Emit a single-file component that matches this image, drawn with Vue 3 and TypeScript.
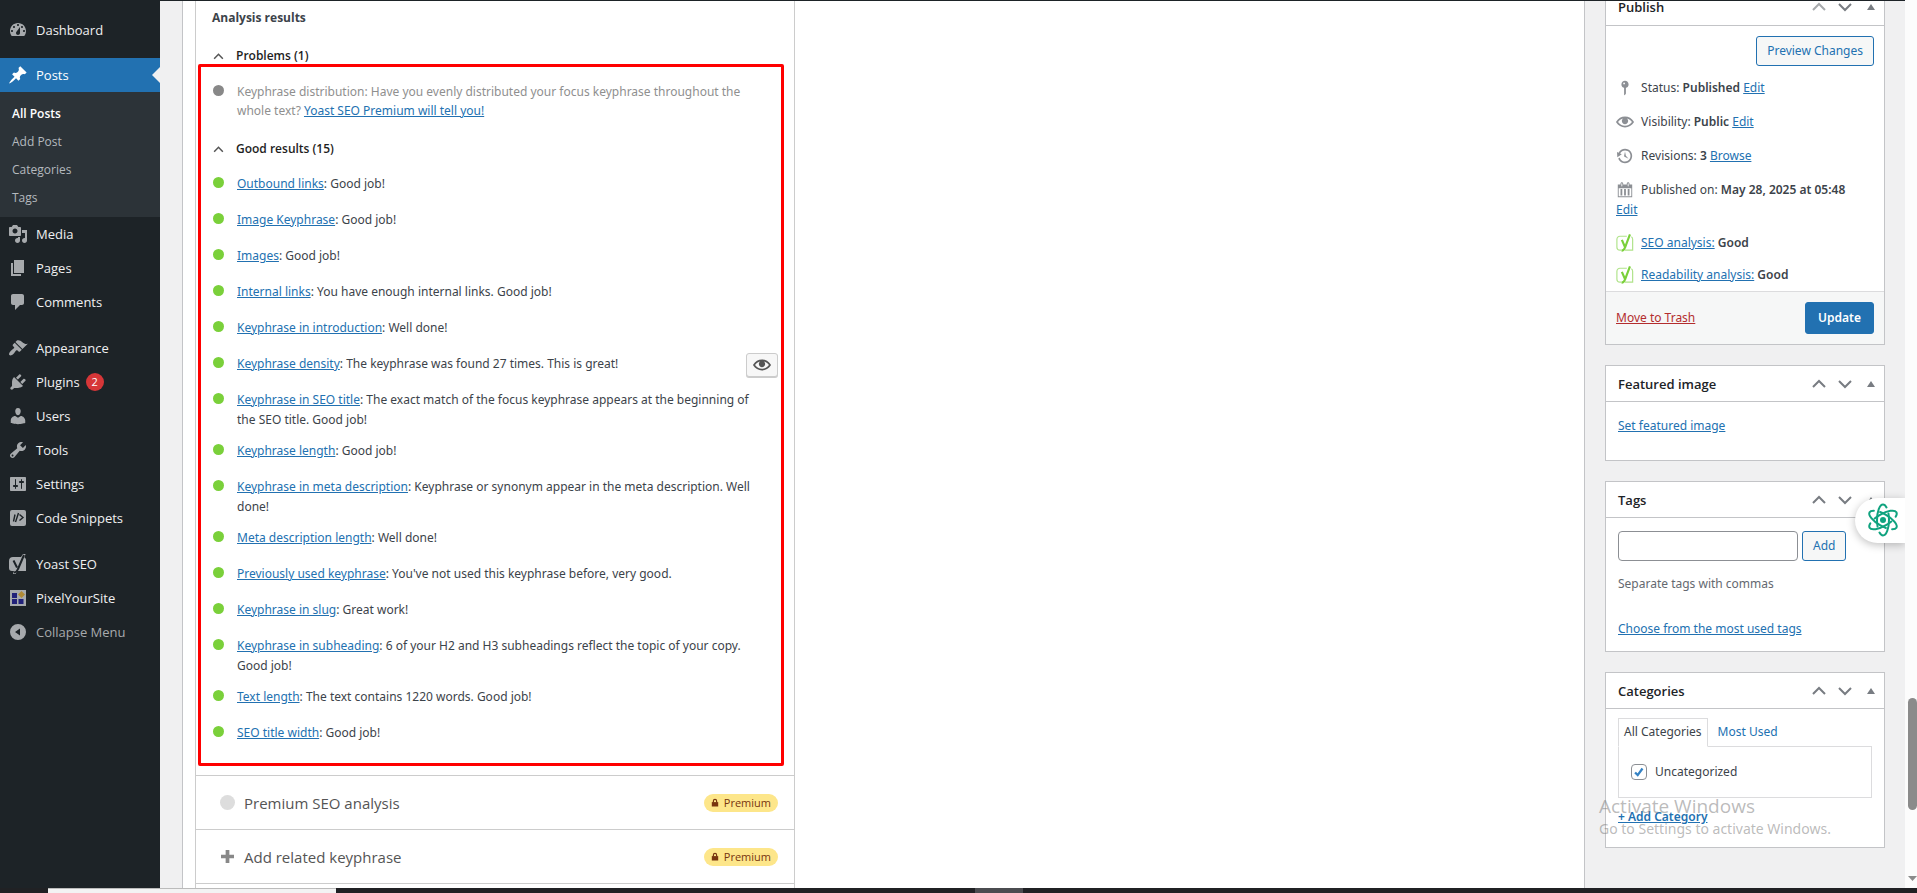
<script setup lang="ts">
import { ref } from 'vue'

interface MenuItem {
  label: string
  icon: string
  active?: boolean
  badge?: number
  gapAfter?: boolean
  children?: string[]
}

interface Result {
  link: string
  text: string
  marker?: boolean
}

const icons: Record<string, string> = {
  dashboard:
    'M3.76 16h12.48C17.34 14.63 18 12.89 18 11c0-4.41-3.58-8-8-8s-8 3.59-8 8c0 1.89.66 3.63 1.76 5zM10 4c.55 0 1 .45 1 1s-.45 1-1 1-1-.45-1-1 .45-1 1-1zM6 6c.55 0 1 .45 1 1s-.45 1-1 1-1-.45-1-1 .45-1 1-1zm8 0c.55 0 1 .45 1 1s-.45 1-1 1-1-.45-1-1 .45-1 1-1zm-5.37 5.55L12 7v6c0 1.1-.9 2-2 2s-2-.9-2-2c0-.57.24-1.08.63-1.45zM4 10c.55 0 1 .45 1 1s-.45 1-1 1-1-.45-1-1 .45-1 1-1zm12 0c.55 0 1 .45 1 1s-.45 1-1 1-1-.45-1-1 .45-1 1-1z',
  post: 'M10.44 3.02l1.82-1.82 6.36 6.35-1.83 1.82c-1.05-.68-2.48-.57-3.41.36l-.75.75c-.92.93-1.04 2.35-.35 3.41l-1.83 1.82-2.41-2.41-2.8 2.79c-.42.42-3.38 2.71-3.8 2.29s1.86-3.39 2.28-3.81l2.79-2.79L4.1 9.36l1.83-1.82c1.05.69 2.48.57 3.4-.36l.75-.75c.93-.92 1.05-2.35.36-3.41z',
  media:
    'M13 11V4c0-.55-.45-1-1-1h-1.67L9 1H5L3.67 3H2c-.55 0-1 .45-1 1v7c0 .55.45 1 1 1h10c.55 0 1-.45 1-1zM7 4.5c1.38 0 2.5 1.12 2.5 2.5S8.38 9.5 7 9.5 4.5 8.38 4.5 7 5.62 4.5 7 4.5zM14 6h5v10.5c0 1.38-1.12 2.5-2.5 2.5S14 17.88 14 16.5s1.12-2.5 2.5-2.5c.17 0 .34.02.5.05V9h-3V6zm-4 8.05V13h2v3.5c0 1.38-1.12 2.5-2.5 2.5S7 17.88 7 16.5 8.12 14 9.5 14c.17 0 .34.02.5.05z',
  page: 'M6 15V2h10v13H6zm-1 1h8v2H3V5h2v11z',
  comments:
    'M5 2h9c1.1 0 2 .9 2 2v7c0 1.1-.9 2-2 2h-2l-5 5v-5H5c-1.1 0-2-.9-2-2V4c0-1.1.9-2 2-2z',
  appearance:
    'M14.48 11.06L7.41 3.99l1.5-1.5c.5-.56 2.3-.47 3.51.32 1.21.8 1.43 1.28 2.91 2.1 1.18.64 2.45 1.26 4.45.85zm-.71.71L6.7 4.7 4.93 6.47c-.39.39-.39 1.02 0 1.41l1.06 1.06c.39.39.39 1.03 0 1.42-.6.6-1.43 1.11-2.21 1.69-.35.26-.7.53-1.01.84C1.43 14.23.4 16.08 1.4 17.07c.99 1 2.84-.03 4.18-1.36.31-.31.58-.66.85-1.02.57-.78 1.08-1.61 1.69-2.21.39-.39 1.02-.39 1.41 0l1.06 1.06c.39.39 1.02.39 1.41 0z',
  plugins:
    'M13.11 4.36L9.87 7.6 8 5.73l3.24-3.24c.35-.34 1.05-.2 1.56.32.52.51.66 1.21.31 1.55zm-8 1.77l.91-1.12 9.01 9.01-1.19.84c-.71.71-2.63 1.16-3.82 1.16H6.14L4.9 17.26c-.59.59-1.54.59-2.12 0-.59-.58-.59-1.53 0-2.12l1.24-1.24v-3.88c0-1.13.4-3.19 1.09-3.89zm7.26 3.97l3.24-3.24c.34-.35 1.04-.21 1.55.31.52.51.66 1.21.31 1.55l-3.24 3.25z',
  users:
    'M10 9.25c-2.27 0-2.73-3.44-2.73-3.44C7 4.02 7.82 2 9.97 2c2.16 0 2.98 2.02 2.71 3.81 0 0-.41 3.44-2.68 3.44zm0 2.57L12.72 10c2.39 0 4.52 2.33 4.52 4.53v2.49s-3.65 1.13-7.24 1.13c-3.65 0-7.24-1.13-7.24-1.13v-2.49c0-2.25 1.94-4.48 4.47-4.48z',
  tools:
    'M16.68 9.77c-1.34 1.34-3.3 1.67-4.95.99l-5.41 6.52c-.99.99-2.59.99-3.58 0s-.99-2.59 0-3.57l6.52-5.42c-.68-1.65-.35-3.61.99-4.95 1.28-1.28 3.12-1.62 4.72-1.06l-2.89 2.89 2.82 2.82 2.86-2.87c.53 1.58.18 3.39-1.08 4.65zM3.81 16.21c.4.39 1.04.39 1.43 0 .4-.4.4-1.04 0-1.43-.39-.4-1.03-.4-1.43 0-.39.39-.39 1.03 0 1.43z',
  settings:
    'M18 16V4c0-.55-.45-1-1-1H3c-.55 0-1 .45-1 1v12c0 .55.45 1 1 1h14c.55 0 1-.45 1-1zM8 11h1c.55 0 1 .45 1 1s-.45 1-1 1H8v1.5c0 .28-.22.5-.5.5s-.5-.22-.5-.5V13H6c-.55 0-1-.45-1-1s.45-1 1-1h1V5.5c0-.28.22-.5.5-.5s.5.22.5.5V11zm5-2h-1c-.55 0-1-.45-1-1s.45-1 1-1h1V5.5c0-.28.22-.5.5-.5s.5.22.5.5V7h1c.55 0 1 .45 1 1s-.45 1-1 1h-1v5.5c0 .28-.22.5-.5.5s-.5-.22-.5-.5V9z',
  eye: 'M19.7 9.4C17.7 6 14 3.9 10 3.9S2.3 6 .3 9.4L0 10l.3.6c2 3.4 5.7 5.5 9.7 5.5s7.7-2.1 9.7-5.5l.3-.6-.3-.6zM10 14.1c-3.1 0-6-1.6-7.7-4.1C3.6 8 5.7 6.6 8 6.1c-.9.6-1.5 1.7-1.5 2.9 0 1.9 1.6 3.5 3.5 3.5s3.5-1.6 3.5-3.5c0-1.2-.6-2.3-1.5-2.9 2.3.5 4.4 1.9 5.7 3.9-1.7 2.5-4.6 4.1-7.7 4.1z',
  pin: 'M14 6c0 1.86-1.28 3.41-3 3.86V16c0 1-2 2-2 2V9.86c-1.72-.45-3-2-3-3.86 0-2.21 1.79-4 4-4s4 1.79 4 4zM8 5c0 .55.45 1 1 1s1-.45 1-1-.45-1-1-1-1 .45-1 1z',
  backup:
    'M13.65 2.88c3.93 2.01 5.48 6.84 3.47 10.77s-6.83 5.48-10.77 3.47c-1.87-.96-3.2-2.56-3.86-4.4l1.64-1.03c.45 1.57 1.52 2.95 3.08 3.76 3.01 1.54 6.69.35 8.23-2.66 1.55-3.01.36-6.69-2.65-8.24C9.78 3.01 6.1 4.2 4.56 7.21l1.88.97-4.95 3.08-.39-5.82 1.78.91C4.9 2.4 9.75.89 13.65 2.88zm-4.36 7.83C9.11 10.53 9 10.28 9 10c0-.07.03-.12.04-.19h-.01L10 5l.97 4.81L14 13l-4.5-2.12.02-.02c-.08-.04-.16-.09-.23-.15z',
  calendar:
    'M15 4h3v14H2V4h3V3c0-.83.67-1.5 1.5-1.5S8 2.17 8 3v1h4V3c0-.83.67-1.5 1.5-1.5S15 2.17 15 3v1zM6 3v2.5c0 .28.22.5.5.5s.5-.22.5-.5V3c0-.28-.22-.5-.5-.5S6 2.72 6 3zm7 0v2.5c0 .28.22.5.5.5s.5-.22.5-.5V3c0-.28-.22-.5-.5-.5s-.5.22-.5.5zm4 14V8H3v9h14zM7 16V9H5v7h2zm4 0V9H9v7h2zm4 0V9h-2v7h2z',
}

const menu: MenuItem[] = [
  { label: 'Dashboard', icon: 'dashboard', gapAfter: true },
  {
    label: 'Posts',
    icon: 'post',
    active: true,
    children: ['All Posts', 'Add Post', 'Categories', 'Tags'],
  },
  { label: 'Media', icon: 'media' },
  { label: 'Pages', icon: 'page' },
  { label: 'Comments', icon: 'comments', gapAfter: true },
  { label: 'Appearance', icon: 'appearance' },
  { label: 'Plugins', icon: 'plugins', badge: 2 },
  { label: 'Users', icon: 'users' },
  { label: 'Tools', icon: 'tools' },
  { label: 'Settings', icon: 'settings' },
  { label: 'Code Snippets', icon: 'snippets', gapAfter: true },
  { label: 'Yoast SEO', icon: 'yoast' },
  { label: 'PixelYourSite', icon: 'pixel' },
]

const results: Result[] = [
  { link: 'Outbound links', text: 'Good job!' },
  { link: 'Image Keyphrase', text: 'Good job!' },
  { link: 'Images', text: 'Good job!' },
  { link: 'Internal links', text: 'You have enough internal links. Good job!' },
  { link: 'Keyphrase in introduction', text: 'Well done!' },
  { link: 'Keyphrase density', text: 'The keyphrase was found 27 times. This is great!', marker: true },
  {
    link: 'Keyphrase in SEO title',
    text: 'The exact match of the focus keyphrase appears at the beginning of the SEO title. Good job!',
  },
  { link: 'Keyphrase length', text: 'Good job!' },
  {
    link: 'Keyphrase in meta description',
    text: 'Keyphrase or synonym appear in the meta description. Well done!',
  },
  { link: 'Meta description length', text: 'Well done!' },
  { link: 'Previously used keyphrase', text: "You've not used this keyphrase before, very good." },
  { link: 'Keyphrase in slug', text: 'Great work!' },
  {
    link: 'Keyphrase in subheading',
    text: '6 of your H2 and H3 subheadings reflect the topic of your copy. Good job!',
  },
  { link: 'Text length', text: 'The text contains 1220 words. Good job!' },
  { link: 'SEO title width', text: 'Good job!' },
]

const status = [
  { icon: 'pin', label: 'Status:', value: 'Published', action: 'Edit' },
  { icon: 'eye', label: 'Visibility:', value: 'Public', action: 'Edit' },
  { icon: 'backup', label: 'Revisions:', value: '3', action: 'Browse' },
  { icon: 'calendar', label: 'Published on:', value: 'May 28, 2025 at 05:48', action: 'Edit' },
]

const scores = ['SEO analysis:', 'Readability analysis:']
const panels = ['Publish', 'Featured image', 'Tags', 'Categories']
const newTag = ref('')
const uncategorized = ref(true)
</script>

<template>
  <div class="desktop">
    <div class="browser">
      <div class="page">
        <nav class="sidebar" aria-label="Main menu">
          <template v-for="item in menu" :key="item.label">
            <a href="#" class="menu-item" :class="{ active: item.active }">
              <svg v-if="item.icon === 'snippets'" class="icon" viewBox="0 0 20 20">
                <rect x="2" y="2" width="16" height="16" rx="2" />
                <path class="cut" d="M7 6.5L5.500 13.500M10.500 5L7.500 14M11.500 6.500L15 9.500L11.500 12.500" />
              </svg>
              <svg v-else-if="item.icon === 'yoast'" class="icon" viewBox="0 0 20 20">
                <path d="M5 3h8l2-3h2.600l-1.200 3.200C17.400 4 18 5 18 6v11H9l-1.500 3H5l1-3H4c-2 0-3-1-3-3V7c0-2.500 1.500-4 4-4z" />
                <path class="cut thick" d="M5.500 6.500l3.500 7M16 1L10 15c-1 2.500-2 3.500-4 3.500" />
              </svg>
              <svg v-else-if="item.icon === 'pixel'" class="icon" viewBox="0 0 20 20">
                <rect x="2" y="2" width="16" height="16" />
                <path fill="#22227a" d="M4 5h5v5H4zM4 11h5v5H4zM10.500 11h5v5h-5z" />
                <path fill="#b08a35" d="M13.500 3l3.500 3.500-3.500 3.500L10 6.500z" />
              </svg>
              <svg v-else class="icon" viewBox="0 0 20 20"><path fill-rule="evenodd" :d="icons[item.icon]" /></svg>
              <span>{{ item.label }}</span>
              <span v-if="item.badge" class="count">{{ item.badge }}</span>
            </a>
            <div v-if="item.children" class="submenu">
              <a
                v-for="(child, i) in item.children"
                :key="child"
                href="#"
                :class="{ current: i === 0 }"
              >{{ child }}</a>
            </div>
            <div v-if="item.gapAfter" class="separator"></div>
          </template>
          <button type="button" class="menu-item collapse">
            <svg class="icon" viewBox="0 0 20 20">
              <path fill-rule="evenodd" d="M10 2a8 8 0 100 16 8 8 0 000-16zM12 6.500v7L7 10z" />
            </svg>
            <span>Collapse Menu</span>
          </button>
        </nav>

        <main class="content">
          <section class="postbox">
            <div class="yoast">
              <div class="analysis">
                <h2>Analysis results</h2>
                <button type="button" class="group">
                  <svg viewBox="0 0 12 12"><path d="M2 8l4-4 4 4" /></svg>Problems (1)
                </button>
                <ul>
                  <li class="muted">
                    <i class="dot grey"></i>
                    <p>
                      Keyphrase distribution: Have you evenly distributed your focus keyphrase throughout the whole
                      text? <a href="#">Yoast SEO Premium will tell you!</a>
                    </p>
                  </li>
                </ul>
                <button type="button" class="group good">
                  <svg viewBox="0 0 12 12"><path d="M2 8l4-4 4 4" /></svg>Good results (15)
                </button>
                <ul>
                  <li v-for="r in results" :key="r.link">
                    <i class="dot"></i>
                    <p><a href="#">{{ r.link }}</a>: {{ r.text }}</p>
                    <button v-if="r.marker" type="button" class="marker" aria-label="Highlight this result in the text">
                      <svg viewBox="0 0 20 20"><path :d="icons.eye" /></svg>
                    </button>
                  </li>
                </ul>
                <div class="highlight"></div>
              </div>
              <button type="button" class="upsell">
                <span class="circle"></span>
                <span class="name">Premium SEO analysis</span>
                <span class="premium">
                  <svg viewBox="0 0 10 10"><path d="M1 4.500h8V10H1z" /><path class="shackle" d="M3 5V3a2 2 0 014 0v2" /></svg>
                  Premium
                </span>
              </button>
              <button type="button" class="upsell">
                <svg class="plus" viewBox="0 0 14 14"><path d="M5 0h4v5h5v4H9v5H5V9H0V5h5z" /></svg>
                <span class="name">Add related keyphrase</span>
                <span class="premium">
                  <svg viewBox="0 0 10 10"><path d="M1 4.500h8V10H1z" /><path class="shackle" d="M3 5V3a2 2 0 014 0v2" /></svg>
                  Premium
                </span>
              </button>
            </div>
          </section>

          <aside class="side">
            <section v-for="panel in panels" :key="panel" class="box">
              <header>
                <h2>{{ panel }}</h2>
                <button type="button" :aria-label="`Move ${panel} up`" :class="{ disabled: panel === 'Publish' }">
                  <svg viewBox="0 0 14 10"><path d="M1 8l6-6 6 6" /></svg>
                </button>
                <button type="button" :aria-label="`Move ${panel} down`">
                  <svg viewBox="0 0 14 10"><path d="M1 2l6 6 6-6" /></svg>
                </button>
                <button type="button" :aria-label="`Toggle ${panel}`">
                  <svg class="toggle" viewBox="0 0 8 6"><path d="M0 6l4-6 4 6z" /></svg>
                </button>
              </header>

              <template v-if="panel === 'Publish'">
                <div class="preview"><button type="button" class="btn">Preview Changes</button></div>
                <div class="statuses">
                  <div v-for="s in status" :key="s.label" class="status">
                    <svg viewBox="0 0 20 20"><path fill-rule="evenodd" :d="icons[s.icon]" /></svg>
                    {{ s.label }} <b>{{ s.value }}</b> {{ ' ' }}<a href="#">{{ s.action }}</a>
                  </div>
                  <div v-for="s in scores" :key="s" class="score">
                    <svg viewBox="0 0 20 20">
                      <path class="frame" d="M12 2.500H4.500c-2 0-3.500 1.500-3.500 3.500v8.500c0 2 1.500 3.500 3.500 3.500H6M10 18h8.500V6c0-1.500-.5-2.500-1.500-3" />
                      <path class="letter" d="M6.500 6.500l3.500 8M15.500.500L10 15c-.8 2.300-1.800 3.500-3.800 3.500" />
                    </svg>
                    <a href="#">{{ s }}</a>&nbsp;<b>Good</b>
                  </div>
                </div>
                <footer>
                  <a href="#" class="trash">Move to Trash</a>
                  <button type="button" class="btn primary">Update</button>
                </footer>
              </template>

              <div v-else-if="panel === 'Featured image'" class="inside featured">
                <a href="#">Set featured image</a>
              </div>

              <div v-else-if="panel === 'Tags'" class="inside tags">
                <div class="add-tag">
                  <input v-model="newTag" type="text" aria-label="Add Tag" />
                  <button type="button" class="btn">Add</button>
                </div>
                <p>Separate tags with commas</p>
                <a href="#">Choose from the most used tags</a>
              </div>

              <div v-else class="inside categories">
                <div class="tabs">
                  <a href="#" class="tab on">All Categories</a>
                  <a href="#" class="tab">Most Used</a>
                </div>
                <div class="list">
                  <label><input v-model="uncategorized" type="checkbox" /><span class="box-tick"><svg v-if="uncategorized" viewBox="0 0 16 16"><path d="M3.500 8.500l3 3L12 4" /></svg></span>Uncategorized</label>
                </div>
                <a href="#" class="new">+ Add Category</a>
              </div>
            </section>
          </aside>
        </main>

        <button type="button" class="assistant" aria-label="Open assistant">
          <svg viewBox="0 0 32 34">
            <ellipse
              v-for="n in 3"
              :key="n"
              cx="16"
              cy="17"
              rx="6"
              ry="15.500"
              pathLength="100"
              :transform="`rotate(${n * 60} 16 17)`"
            />
            <circle cx="16" cy="17" r="3" />
          </svg>
        </button>
        <div class="watermark">
          <div class="big">Activate Windows</div>
          <div>Go to Settings to activate Windows.</div>
        </div>
      </div>
      <div class="scrollbar">
        <div class="thumb"></div>
        <svg viewBox="0 0 9 5"><path d="M0 0h9L4.500 5z" /></svg>
      </div>
    </div>
    <div class="taskbar"><span class="task-search"></span><span class="task-app"></span></div>
  </div>
</template>

<style>
body {
  margin: 0;
}
</style>

<style scoped>
* {
  box-sizing: border-box;
}
.desktop {
  height: 100vh;
  display: flex;
  flex-direction: column;
  overflow: hidden;
  font: 12px/20px 'Open Sans', 'Noto Sans', sans-serif;
  color: #3c434a;
}
.browser {
  flex: 1;
  min-height: 0;
  display: flex;
}
.page {
  position: relative;
  flex: 1;
  min-width: 0;
  display: flex;
  overflow: hidden;
  background: #f0f0f1;
  border-top: 1px solid #1d2327;
}
h2,
p,
ul {
  margin: 0;
  padding: 0;
}
ul {
  list-style: none;
}
a {
  color: #2271b1;
}
button {
  font: inherit;
  color: inherit;
  padding: 0;
  margin: 0;
  border: 0;
  background: none;
}
b {
  font-weight: 600;
}

/* Sidebar */
.sidebar {
  width: 160px;
  flex: none;
  padding-top: 12px;
  background: #1d2327;
}
.menu-item {
  position: relative;
  display: flex;
  align-items: center;
  gap: 8px;
  width: 100%;
  height: 34px;
  padding-left: 8px;
  font-size: 13px;
  color: #f0f0f1;
  text-decoration: none;
}
.icon {
  width: 20px;
  height: 20px;
  fill: #a7aaad;
}
.icon .cut {
  fill: none;
  stroke: #1d2327;
  stroke-width: 1.4;
}
.icon .cut.thick {
  stroke-width: 2;
}
.menu-item.active {
  background: #2271b1;
  color: #fff;
}
.menu-item.active .icon {
  fill: #fff;
}
.menu-item.active::after {
  content: '';
  position: absolute;
  right: 0;
  border: 8px solid transparent;
  border-right-color: #f0f0f1;
  border-left: 0;
}
.separator {
  height: 11px;
}
.separator ~ .separator {
  height: 12px;
}
.count {
  width: 18px;
  height: 18px;
  margin-left: -2px;
  border-radius: 9px;
  background: #d63638;
  color: #fff;
  font-size: 11px;
  line-height: 18px;
  text-align: center;
}
.submenu {
  display: flex;
  flex-direction: column;
  padding: 8px 0 5px 12px;
  background: #2c3338;
}
.submenu a {
  line-height: 28px;
  color: #b4b9be;
  text-decoration: none;
}
.submenu a.current {
  color: #fff;
  font-weight: 600;
}
.menu-item.collapse {
  color: #a7aaad;
}

/* SEO panel */
.content {
  flex: 1;
  min-width: 0;
  display: flex;
  padding-left: 22px;
}
.postbox {
  flex: 1;
  min-width: 0;
  padding-left: 12px;
  background: #fff;
  border: solid #c3c4c7;
  border-width: 0 1px;
}
.yoast {
  max-width: 600px;
  height: 100%;
  border: solid #ccc;
  border-width: 0 1px;
}
.analysis {
  position: relative;
  padding: 7px 32px 16px 16px;
  border-bottom: 1px solid #ccc;
}
.analysis h2 {
  font-size: 12px;
  font-weight: 700;
}
.group {
  display: flex;
  align-items: center;
  gap: 11px;
  margin: 18px 0 16px;
  font-weight: 600;
  color: #1e1e1e;
}
.group.good {
  margin: 6px 0 15px;
}
.group svg {
  width: 13px;
  height: 13px;
  fill: none;
  stroke: #555;
  stroke-width: 1.4;
}
li {
  position: relative;
  display: flex;
  align-items: flex-start;
  gap: 13px;
  padding: 0 0 11px 1px;
}
li p {
  flex: 1;
  min-height: 25px;
  font-family: 'Noto Sans', 'Open Sans', sans-serif;
}
.muted {
  color: #8f8f8f;
}
.muted p {
  min-height: 40px;
  line-height: 19px;
}
.dot {
  flex: none;
  width: 11px;
  height: 11px;
  margin-top: 3px;
  border-radius: 50%;
  background: #7ad03a;
}
.dot.grey {
  background: #888;
}
.marker {
  position: absolute;
  right: -16px;
  top: -1px;
  display: grid;
  place-items: center;
  width: 32px;
  height: 24px;
  border: 1px solid #ccc;
  border-radius: 3px;
  background: #f7f7f7;
  box-shadow: 0 1px 0 #ccc;
}
.marker svg {
  width: 18px;
  height: 18px;
  fill: #555;
}
.highlight {
  position: absolute;
  inset: 63px 10px 9px 2px;
  border: 3px solid #f00;
  border-radius: 2px;
  pointer-events: none;
}
.upsell {
  display: flex;
  align-items: center;
  gap: 9px;
  width: 100%;
  height: 54px;
  padding: 0 16px 0 24px;
  border-bottom: 1px solid #ccc;
  font-size: 15px;
  color: #555;
}
.circle {
  width: 15px;
  height: 15px;
  border-radius: 50%;
  background: #ddd;
}
.plus {
  width: 15px;
  height: 13px;
  fill: #888;
}
.name {
  flex: 1;
  text-align: left;
}
.premium {
  display: flex;
  align-items: center;
  gap: 5px;
  height: 18px;
  padding: 0 7px;
  border-radius: 9px;
  background: #fde68a;
  color: #78350f;
  font-size: 11px;
}
.premium svg {
  width: 8px;
  height: 9px;
  fill: #78350f;
}
.premium .shackle {
  fill: none;
  stroke: #78350f;
  stroke-width: 1.5;
}

/* Side boxes */
.side {
  width: 320px;
  flex: none;
  padding: 0 20px;
  display: flex;
  flex-direction: column;
  gap: 20px;
  font-family: 'Noto Sans', 'Open Sans', sans-serif;
}
.box {
  background: #fff;
  border: 1px solid #c3c4c7;
}
.box:first-child {
  border-top: 0;
}
.box header {
  display: flex;
  align-items: center;
  height: 36px;
  padding: 0 8px 0 12px;
  border-bottom: 1px solid #c3c4c7;
}
.box:first-child header {
  height: 37px;
  margin-top: -12px;
}
.box h2 {
  flex: 1;
  font-family: 'Open Sans', 'Noto Sans', sans-serif;
  font-size: 13px;
  font-weight: 600;
  color: #1d2327;
}
header button {
  display: grid;
  place-items: center;
  width: 26px;
  height: 26px;
}
header button:last-child {
  margin-right: -8px;
}
header svg {
  width: 14px;
  height: 10px;
  fill: none;
  stroke: #787c82;
  stroke-width: 2;
}
header svg.toggle {
  width: 8px;
  height: 6px;
  fill: #787c82;
  stroke: none;
}
header .disabled svg {
  stroke: #a7aaad;
}
.btn {
  height: 30px;
  padding: 0 10px;
  border: 1px solid #2271b1;
  border-radius: 3px;
  background: #f6f7f7;
  color: #2271b1;
}
.btn.primary {
  height: 32px;
  padding: 0 12px;
  background: #2271b1;
  color: #fff;
  font-weight: 600;
}
.preview {
  display: flex;
  justify-content: flex-end;
  padding: 10px 10px 5px;
}
.status {
  padding: 7px 16px 7px 10px;
}
.status svg {
  width: 18px;
  height: 18px;
  margin-right: 4px;
  fill: #8c8f94;
  vertical-align: -5px;
}
.score {
  display: flex;
  align-items: center;
  height: 32px;
  padding: 0 10px;
}
.score svg {
  width: 18px;
  height: 18px;
  margin-right: 7px;
  fill: none;
  stroke: #7ad03a;
}
.score .frame {
  stroke-opacity: 0.6;
  stroke-width: 1.3;
}
.score .letter {
  stroke-width: 2.4;
}
footer {
  display: flex;
  align-items: center;
  justify-content: space-between;
  padding: 10px;
  background: #f6f7f7;
  border-top: 1px solid #dcdcde;
}
.trash {
  color: #b32d2e;
}
.inside {
  padding: 13px 12px 24px;
}
.featured {
  padding-top: 14px;
}
.add-tag {
  display: flex;
  gap: 4px;
}
.add-tag input {
  width: 180px;
  height: 30px;
  padding: 0 8px;
  border: 1px solid #8c8f94;
  border-radius: 4px;
  font: inherit;
  background: #fff;
}
.tags {
  padding-bottom: 12px;
}
.tags p {
  margin: 13px 0 25px;
  color: #646970;
}
.categories {
  padding: 9px 12px 20px;
}
.tabs {
  display: flex;
  margin-bottom: -1px;
}
.tab {
  padding: 3px 10px 4px;
  text-decoration: none;
}
.tab.on {
  position: relative;
  padding: 3px 5px 4px;
  border: 1px solid #dcdcde;
  border-bottom-color: #fff;
  background: #fff;
  color: #3c434a;
}
.tab:not(.on) {
  padding-top: 4px;
}
.list {
  padding: 15px 12px;
  border: 1px solid #dcdcde;
}
.list label {
  display: flex;
  align-items: center;
  gap: 8px;
}
.list input {
  position: absolute;
  opacity: 0;
}
.box-tick {
  display: block;
  width: 16px;
  height: 16px;
  border: 1px solid #8c8f94;
  border-radius: 4px;
}
.box-tick svg {
  display: block;
  fill: none;
  stroke: #3582c4;
  stroke-width: 2.6;
}
.new {
  display: block;
  width: max-content;
  margin-top: 9px;
  font-weight: 600;
}

/* Overlays */
.assistant {
  position: absolute;
  right: 0;
  top: 497px;
  width: 50px;
  height: 45px;
  padding: 4px 0 0 5px;
  border-radius: 23px 0 0 23px;
  background: #fff;
  box-shadow: 0 2px 8px rgba(0, 0, 0, 0.25);
}
.assistant svg {
  width: 32px;
  height: 34px;
  fill: none;
  stroke: #10a37f;
  stroke-width: 2;
  stroke-linecap: round;
}
.assistant ellipse {
  stroke-dasharray: 41 9;
  stroke-dashoffset: 9;
}
.assistant circle {
  fill: #10a37f;
  stroke: none;
}
.watermark {
  position: absolute;
  left: calc(100% - 306px);
  bottom: 48px;
  font-family: 'Noto Sans', 'Open Sans', sans-serif;
  font-size: 14px;
  line-height: 22px;
  white-space: nowrap;
  color: rgba(130, 130, 130, 0.55);
  pointer-events: none;
}
.watermark .big {
  font-family: 'Open Sans', 'Noto Sans', sans-serif;
  font-size: 19px;
  line-height: 24px;
}

/* Window chrome */
.scrollbar {
  width: 12px;
  flex: none;
  display: flex;
  flex-direction: column;
  align-items: flex-end;
  justify-content: flex-end;
  padding-bottom: 7px;
  background: #fcfcfc;
}
.thumb {
  width: 9px;
  height: 112px;
  margin-bottom: 66px;
  border-radius: 5px;
  background: #8b8b8b;
}
.scrollbar svg {
  width: 9px;
  height: 5px;
  fill: #8b8b8b;
}
.taskbar {
  height: 5px;
  flex: none;
  display: flex;
  justify-content: flex-start;
  padding-left: 48px;
  background: #202124;
}
.task-search {
  width: 288px;
  border-top: 1px solid #bbb;
  background: #f3f3f3;
}
.task-app {
  width: 48px;
  margin-left: 639px;
  background: #4b4c50;
}
</style>
